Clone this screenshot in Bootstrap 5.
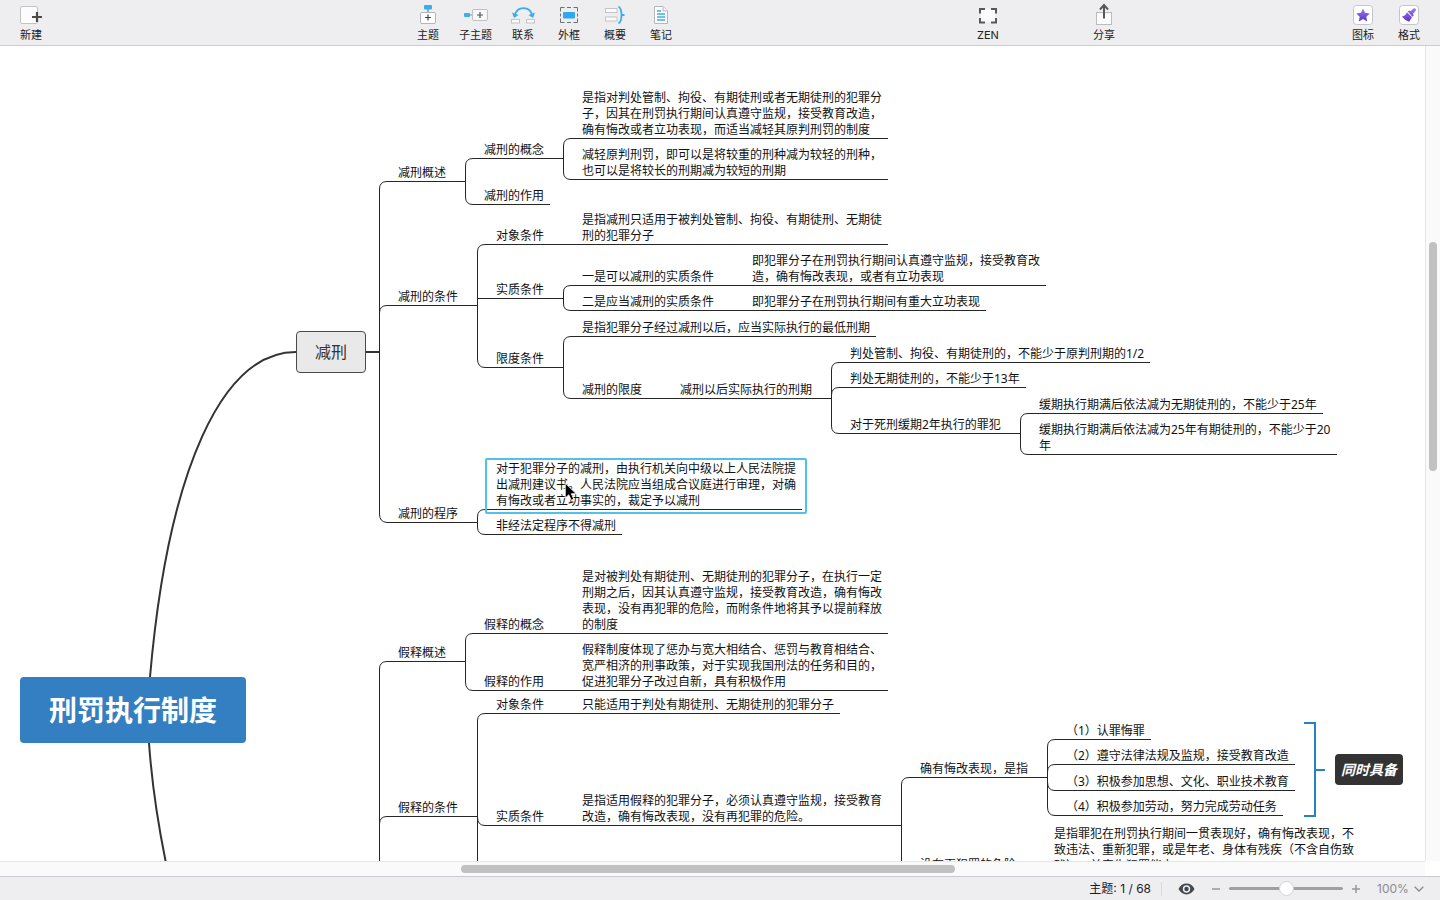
<!DOCTYPE html>
<html lang="zh-CN">
<head>
<meta charset="utf-8">
<meta name="viewport" content="width=device-width, initial-scale=1">
<title>刑罚执行制度</title>
<link href="https://cdn.jsdelivr.net/npm/bootstrap@5.3.0/dist/css/bootstrap.min.css" rel="stylesheet">
<style>
  body { font-family: "Noto Sans", "Noto Sans CJK SC", sans-serif; color: #1c1c1e; background: #fff; text-spacing-trim: space-all; }

  /* toolbar */
  .toolbar { background: #eeeef0; border-bottom: 1px solid #cbcbcf; padding-right: 8px; }
  .tool { width: 46px; padding: 3px 0; border: 0; border-radius: 0; font-family: Inter, "Noto Sans CJK SC", sans-serif; font-size: 11px; line-height: 14px; color: #222; }
  .tool svg { display: block; width: 32px; height: 24px; margin: 0 auto 1px; overflow: visible; }
  .tool-edge { width: 62px; }
  .tool-wide { width: 49px; }
  .gap-a { flex: 343 1 0; } .gap-b { flex: 281 1 0; } .gap-c { flex: 70 1 0; } .gap-d { flex: 213 1 0; }

  /* map sheet, scrolled up under the toolbar */
  .sheet { position: absolute; top: -46px; left: 0; width: 100%; height: 1000px; }
  .links { position: absolute; top: 0; left: 0; width: 100%; height: 100%; fill: none; stroke: #262626; }
  .topic { position: absolute; left: var(--x); top: var(--y); width: max-content; max-width: var(--w, 312px); padding: 0 6px; border-bottom: 1px solid #262626; font-size: 12px; line-height: 16px; color: #111; }
  .topic-main { border: 1px solid #4a4a4a; border-radius: 4px; background: #e9e9e9; padding: 8px 18px; font-size: 16px; line-height: 24px; color: #333; }
  .topic-root { border: 0; border-radius: 4px; background: #337fc2; padding: 12px 29px; font-size: 28px; line-height: 42px; font-weight: 700; color: #fff; }
  .topic-note { border: 0; border-radius: 4px; background: #333; padding: 5px 6px; font-size: 14px; line-height: 21px; font-weight: 700; font-style: italic; color: #fff; }
  .topic-active::after { content: ""; position: absolute; inset: -3px -5px -5px; border: 2px solid #52c0e8; border-radius: 2px; }
  .pointer { position: absolute; left: 564px; top: 482px; width: 14px; height: 20px; }

  /* scrollbars */
  .track-v { width: 15px; background: #fafafa; border-left: 1px solid #e6e6e6; padding: 0 3px; }
  .track-h { height: 15px; background: #fafafa; border-top: 1px solid #e6e6e6; margin-right: 15px; padding: 3px 0; }
  .thumb { background: #c1c1c1; border-radius: 4px; }

  /* status bar */
  .statusbar { height: 24px; background: #eeeef0; border-top: 1px solid #cbcbcf; font-family: Inter, "Noto Sans CJK SC", sans-serif; font-size: 12px; line-height: 23px; padding-right: 16px; }
  .divider { width: 1px; height: 14px; background: #d8d8da; margin: 0 16px 0 10px; }
  .plain { border: 0; background: none; padding: 0; display: flex; }
  .zoom-range { appearance: none; width: 114px; height: 16px; margin: 0 8px; background: none; }
  .zoom-range::-webkit-slider-runnable-track { height: 3px; background: #a0a0a3; border-radius: 2px; }
  .zoom-range::-webkit-slider-thumb { appearance: none; width: 15px; height: 15px; margin-top: -6px; border-radius: 50%; background: #fff; border: 1px solid #d2d2d4; }
  .zoom-select { appearance: none; border: 0; background: none; padding: 0; width: 33px; font-size: 12px; color: #8b8b8f; }
</style>
</head>
<body class="vh-100 d-flex flex-column overflow-hidden">

<nav class="toolbar d-flex flex-shrink-0" aria-label="工具栏">
  <button class="btn tool tool-edge" type="button">
    <svg viewBox="0 0 32 24"><rect x="5.500" y="3.500" width="17" height="17" rx="1.500" fill="#fcfcfc" stroke="#c2c2c4"/><path d="M22 9v10M17 14h10" stroke="#4a4a4c" stroke-width="2.200"/></svg>新建</button>
  <div class="gap-a"></div>
  <button class="btn tool" type="button">
    <svg viewBox="0 0 32 24"><path d="M16 6v4" stroke="#55a5d4" stroke-width="1.500"/><rect x="12" y="2" width="8" height="4.500" rx="1" fill="#3badea"/><rect x="8.500" y="9.500" width="15" height="11" rx="1.500" fill="#fff" stroke="#b5b5b7"/><path d="M16 11.500v6M13 14.500h6" stroke="#444" stroke-width="1.200"/></svg>主题</button>
  <button class="btn tool tool-wide" type="button">
    <svg viewBox="0 0 32 24"><path d="M9 12h4" stroke="#8bb8d0" stroke-width="1.500"/><rect x="4" y="10" width="6" height="4" rx="1" fill="#3badea"/><rect x="12.500" y="6.500" width="15" height="11" rx="1.500" fill="#f8f8f8" stroke="#c0c0c2"/><path d="M20 9v6M17 12h6" stroke="#555" stroke-width="1.200"/></svg>子主题</button>
  <button class="btn tool" type="button">
    <svg viewBox="0 0 32 24"><path d="M7.500 13C9 7 13 5.200 16.500 5.200S24 7 25.500 13" fill="none" stroke="#3badea" stroke-width="1.800"/><path d="M5 9.500l2 5.500 4.500-3zM28 9.500L26 15l-4.500-3z" fill="#3badea"/><rect x="4.500" y="16.500" width="8" height="3.500" fill="#fafafa" stroke="#c4c4c6"/><rect x="19.500" y="16.500" width="8" height="3.500" fill="#fafafa" stroke="#c4c4c6"/></svg>联系</button>
  <button class="btn tool" type="button">
    <svg viewBox="0 0 32 24"><path d="M7.500 8.500v-4h4M14 4.500h4M20.500 4.500h4v4M24.500 10.500v3M24.500 15.500v4h-4M18 19.500h-4M11.500 19.500h-4v-4M7.500 13.500v-3" fill="none" stroke="#707072"/><rect x="10" y="9" width="12" height="6.500" rx="1" fill="#2ea8ee"/></svg>外框</button>
  <button class="btn tool" type="button">
    <svg viewBox="0 0 32 24"><rect x="6.500" y="5.500" width="11.500" height="4" fill="#fafafa" stroke="#c4c4c6"/><rect x="6.500" y="14" width="11.500" height="4" fill="#fafafa" stroke="#c4c4c6"/><path d="M19.500 3.500C23.500 6 23.500 18 19.500 20.500M22 12h3.500" fill="none" stroke="#3badea" stroke-width="1.800"/></svg>概要</button>
  <button class="btn tool" type="button">
    <svg viewBox="0 0 32 24"><path d="M9.500 3.500h8.500l4.500 4.500v12.500h-13z" fill="#fff" stroke="#b8b8ba"/><path d="M18 3.500V8h4.500" fill="#f0f0f0" stroke="#b8b8ba"/><path d="M12 8h4M12 11h8M12 14h8M12 17h8" stroke="#3badea" stroke-width="1.300"/></svg>笔记</button>
  <div class="gap-b"></div>
  <button class="btn tool" type="button">
    <svg viewBox="0 0 32 24"><rect x="9" y="6" width="14" height="13" fill="#fbfbfb"/><path d="M8 10.500V6h5M19 6h5v4.500M24 15v4.500h-5M13 19.500H8V15" fill="none" stroke="#58585a" stroke-width="2"/></svg>ZEN</button>
  <div class="gap-c"></div>
  <button class="btn tool" type="button">
    <svg viewBox="0 0 32 24"><rect x="8.500" y="9.500" width="15" height="12" fill="#fbfbfb" stroke="#bcbcbe"/><path d="M16 15.500V3M12 6.500l4-4.500 4 4.500" fill="none" stroke="#58585a" stroke-width="2"/></svg>分享</button>
  <div class="gap-d"></div>
  <button class="btn tool" type="button">
    <svg viewBox="0 0 32 24"><defs><linearGradient id="violet" x2="0" y2="1"><stop stop-color="#9a7cea"/><stop offset="1" stop-color="#5c34c4"/></linearGradient></defs><rect x="6.500" y="2.500" width="19" height="19" rx="3" fill="#fff" stroke="#c6c6c8"/><path d="M16 5.500l2 4.300 4.700.6-3.400 3.300.8 4.700-4.100-2.300-4.100 2.300.8-4.700-3.400-3.300 4.700-.6z" fill="url(#violet)"/></svg>图标</button>
  <button class="btn tool" type="button">
    <svg viewBox="0 0 32 24"><rect x="6.500" y="2.500" width="19" height="19" rx="3" fill="#fff" stroke="#c6c6c8"/><path d="M20.500 5.500q1.500-.5 2.200.6t-.4 2.200l-2.300 2.500.8 1.700-1.300 1.200L14.700 8.600l1.300-1.200 1.800.7zM14 9.200l5 5.100-2.800 4.400q-4.400-1.200-7.400-5.200 3 0 5.200-4.300z" fill="url(#violet)"/></svg>格式</button>
</nav>

<div class="d-flex flex-grow-1 overflow-hidden">
  <main class="flex-grow-1 position-relative overflow-hidden">
    <div class="sheet">
      <svg class="links" aria-hidden="true">
        <!-- branches from the central topic -->
        <g stroke="#333" stroke-width="2">
          <path d="M150 677C168 470 222 352 296 352M149 743C152 785 158 825 167 868"/>
          <path d="M366 352H379"/>
        </g>
        <!-- 减刑 -->
        <path d="M392 181.500H387Q379.500 181.500 379.500 189V514Q379.500 522 387 522.500H392M379.500 352V313Q379.500 305.500 387 305.500H392"/>
        <path d="M452 181.500H465.500M478 158.500H473Q465.500 158.500 465.500 166V197Q465.500 204.500 473 204.500H478"/>
        <path d="M550 158.500H563.500M576 138.500H571Q563.500 138.500 563.500 146V172Q563.500 179.500 571 179.500H576"/>
        <path d="M464 305.500H477.500M490 244.500H485Q477.500 244.500 477.500 252V359Q477.500 367.500 485 367.500H490M477.500 305V298.500H490"/>
        <path d="M550 244.500H576M720 285.500H746M720 310.500H746M648 398.500H674"/>
        <path d="M550 298.500H563.500M576 285.500H571Q563.500 285.500 563.500 292V304Q563.500 310.500 571 310.500H576"/>
        <path d="M550 367.500H563.500M576 336.500H571Q563.500 336.500 563.500 344V391Q563.500 398.500 571 398.500H576"/>
        <path d="M818 398.500H831.500M844 362.500H839Q831.500 362.500 831.500 370V426Q831.500 433.500 839 433.500H844M831.500 398V395Q831.500 387.500 839 387.500H844"/>
        <path d="M1006 433.500H1020.500M1033 413.500H1028Q1020.500 413.500 1020.500 421V447Q1020.500 454.500 1028 454.500H1033"/>
        <path d="M464 522.500H477.500M490 509.500H485Q477.500 509.500 477.500 517V527Q477.500 534.500 485 534.500H490"/>
        <!-- 假释 -->
        <path d="M392 661.500H387Q379.500 661.500 379.500 669V880M392 816.500H387Q379.500 816.500 379.500 824"/>
        <path d="M452 661.500H465.500M478 633.500H473Q465.500 633.500 465.500 641V682Q465.500 690.500 473 690.500H478"/>
        <path d="M550 633.500H576M550 690.500H576M550 713.500H576M550 825.500H576"/>
        <path d="M464 816.500H477.500M490 713.500H485Q477.500 713.500 477.500 721V880M477.500 817Q477.500 825.500 485 825.500H490"/>
        <path d="M888 825.500H901.500M914 777.500H909Q901.500 777.500 901.500 785V880"/>
        <path d="M1034 777.500H1047.500M1060 739.500H1055Q1047.500 739.500 1047.500 747V807Q1047.500 815.500 1055 815.500H1060M1047.500 777V772Q1047.500 764.500 1055 764.500H1060M1047.500 777V782Q1047.500 790.500 1055 790.500H1060"/>
        <path d="M1304 723H1315V816H1304M1315 770H1325" stroke="#2583c0" stroke-width="2"/>
      </svg>

      <div class="topic topic-root" style="--x:20px;--y:677px">刑罚执行制度</div>
      <div class="topic topic-main" style="--x:296px;--y:331px">减刑</div>

      <div class="topic" style="--x:392px;--y:165px">减刑概述</div>
      <div class="topic" style="--x:478px;--y:142px">减刑的概念</div>
      <div class="topic" style="--x:576px;--y:90px">是指对判处管制、拘役、有期徒刑或者无期徒刑的犯罪分子，因其在刑罚执行期间认真遵守监规，接受教育改造，确有悔改或者立功表现，而适当减轻其原判刑罚的制度</div>
      <div class="topic" style="--x:576px;--y:147px">减轻原判刑罚，即可以是将较重的刑种减为较轻的刑种，也可以是将较长的刑期减为较短的刑期</div>
      <div class="topic" style="--x:478px;--y:188px">减刑的作用</div>

      <div class="topic" style="--x:392px;--y:289px">减刑的条件</div>
      <div class="topic" style="--x:490px;--y:228px">对象条件</div>
      <div class="topic" style="--x:576px;--y:212px">是指减刑只适用于被判处管制、拘役、有期徒刑、无期徒刑的犯罪分子</div>
      <div class="topic" style="--x:490px;--y:282px">实质条件</div>
      <div class="topic" style="--x:576px;--y:269px">一是可以减刑的实质条件</div>
      <div class="topic" style="--x:746px;--y:253px;--w:300px">即犯罪分子在刑罚执行期间认真遵守监规，接受教育改造，确有悔改表现，或者有立功表现</div>
      <div class="topic" style="--x:576px;--y:294px">二是应当减刑的实质条件</div>
      <div class="topic" style="--x:746px;--y:294px">即犯罪分子在刑罚执行期间有重大立功表现</div>
      <div class="topic" style="--x:490px;--y:351px">限度条件</div>
      <div class="topic" style="--x:576px;--y:320px">是指犯罪分子经过减刑以后，应当实际执行的最低刑期</div>
      <div class="topic" style="--x:576px;--y:382px">减刑的限度</div>
      <div class="topic" style="--x:674px;--y:382px">减刑以后实际执行的刑期</div>
      <div class="topic" style="--x:844px;--y:346px">判处管制、拘役、有期徒刑的，不能少于原判刑期的1/2</div>
      <div class="topic" style="--x:844px;--y:371px">判处无期徒刑的，不能少于13年</div>
      <div class="topic" style="--x:844px;--y:417px">对于死刑缓期2年执行的罪犯</div>
      <div class="topic" style="--x:1033px;--y:397px">缓期执行期满后依法减为无期徒刑的，不能少于25年</div>
      <div class="topic" style="--x:1033px;--y:422px;--w:304px">缓期执行期满后依法减为25年有期徒刑的，不能少于20年</div>

      <div class="topic" style="--x:392px;--y:506px">减刑的程序</div>
      <div class="topic topic-active" style="--x:490px;--y:461px">对于犯罪分子的减刑，由执行机关向中级以上人民法院提出减刑建议书。人民法院应当组成合议庭进行审理，对确有悔改或者立功事实的，裁定予以减刑</div>
      <div class="topic" style="--x:490px;--y:518px">非经法定程序不得减刑</div>

      <div class="topic" style="--x:392px;--y:645px">假释概述</div>
      <div class="topic" style="--x:478px;--y:617px">假释的概念</div>
      <div class="topic" style="--x:576px;--y:569px">是对被判处有期徒刑、无期徒刑的犯罪分子，在执行一定刑期之后，因其认真遵守监规，接受教育改造，确有悔改表现，没有再犯罪的危险，而附条件地将其予以提前释放的制度</div>
      <div class="topic" style="--x:478px;--y:674px">假释的作用</div>
      <div class="topic" style="--x:576px;--y:642px">假释制度体现了惩办与宽大相结合、惩罚与教育相结合、宽严相济的刑事政策，对于实现我国刑法的任务和目的，促进犯罪分子改过自新，具有积极作用</div>

      <div class="topic" style="--x:392px;--y:800px">假释的条件</div>
      <div class="topic" style="--x:490px;--y:697px">对象条件</div>
      <div class="topic" style="--x:576px;--y:697px">只能适用于判处有期徒刑、无期徒刑的犯罪分子</div>
      <div class="topic" style="--x:490px;--y:809px">实质条件</div>
      <div class="topic" style="--x:576px;--y:793px">是指适用假释的犯罪分子，必须认真遵守监规，接受教育改造，确有悔改表现，没有再犯罪的危险。</div>
      <div class="topic" style="--x:914px;--y:761px">确有悔改表现，是指</div>
      <div class="topic" style="--x:1060px;--y:723px">（1）认罪悔罪</div>
      <div class="topic" style="--x:1060px;--y:748px">（2）遵守法律法规及监规，接受教育改造</div>
      <div class="topic" style="--x:1060px;--y:774px">（3）积极参加思想、文化、职业技术教育</div>
      <div class="topic" style="--x:1060px;--y:799px">（4）积极参加劳动，努力完成劳动任务</div>
      <div class="topic" style="--x:914px;--y:857px">没有再犯罪的危险</div>
      <div class="topic" style="--x:1048px;--y:826px">是指罪犯在刑罚执行期间一贯表现好，确有悔改表现，不致违法、重新犯罪，或是年老、身体有残疾（不含自伤致残），并丧失犯罪能力</div>
      <div class="topic topic-note" style="--x:1335px;--y:754px">同时具备</div>

      <svg class="pointer" viewBox="0 0 12 18" aria-hidden="true"><path d="M.8 1v13.500l3.200-3 2.200 5 2.300-1-2.100-4.900h4.400z" fill="#000" stroke="#fff" stroke-width=".8"/></svg>
    </div>
  </main>
  <div class="track-v flex-shrink-0"><div style="height:24%"></div><div class="thumb" style="height:28.100%"></div></div>
</div>
<div class="track-h d-flex flex-shrink-0"><div style="width:32.350%"></div><div class="thumb" style="width:34.700%"></div></div>

<footer class="statusbar d-flex flex-shrink-0 align-items-center justify-content-end">
  <span>主题: 1 / 68</span>
  <span class="divider"></span>
  <button class="plain" type="button" aria-label="显示">
    <svg width="17" height="12" viewBox="0 0 17 12"><path d="M.5 6C4-1.200 13-1.200 16.500 6 13 13.200 4 13.200.5 6z" fill="#43474f"/><circle cx="8.500" cy="6" r="3.700" fill="#eeeef0"/><circle cx="8.500" cy="6" r="2.200" fill="#43474f"/></svg></button>
  <button class="plain ms-3" type="button" aria-label="缩小">
    <svg width="10" height="10" viewBox="0 0 10 10"><path d="M1 5h8" stroke="#98989b" stroke-width="1.500"/></svg></button>
  <input class="zoom-range" type="range" min="0" max="200" value="100" aria-label="缩放">
  <button class="plain" type="button" aria-label="放大">
    <svg width="10" height="10" viewBox="0 0 10 10"><path d="M1 5h8M5 1v8" stroke="#98989b" stroke-width="1.500"/></svg></button>
  <label class="d-flex align-items-center gap-1 ms-3">
    <select class="zoom-select" aria-label="缩放比例"><option>100%</option></select>
    <svg width="10" height="6" viewBox="0 0 10 6"><path d="M.7.700L5 5 9.300.7" fill="none" stroke="#8b8b8f" stroke-width="1.300"/></svg>
  </label>
</footer>

<script src="https://cdn.jsdelivr.net/npm/bootstrap@5.3.0/dist/js/bootstrap.bundle.min.js"></script>
</body>
</html>
